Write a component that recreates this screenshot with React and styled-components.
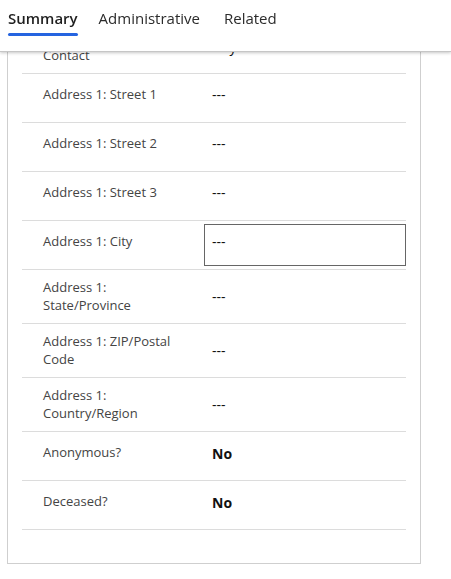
import styled, { createGlobalStyle } from 'styled-components';

const GlobalStyle = createGlobalStyle`
  html, body {
    margin: 0;
    padding: 0;
    background: #ffffff;
    font-family: "Open Sans", "Noto Sans", Arial, sans-serif;
    color: #242424;
  }
`;

const TabBar = styled.div`
  position: fixed;
  top: 0;
  left: 0;
  right: 0;
  height: 51px;
  display: flex;
  align-items: flex-start;
  background: #ffffff;
  border-bottom: 1px solid #c6c6c6;
  box-shadow: 0 1px 3px rgba(0, 0, 0, 0.22);
  z-index: 2;
  padding-left: 8px;
`;

const Tab = styled.div`
  position: relative;
  height: 36px;
  margin-right: ${(props) => props.gap}px;
  padding-top: 8px;
  box-sizing: border-box;
  font-size: 15px;
  line-height: 20px;
  font-weight: ${(props) => (props.active ? 600 : 400)};
  color: ${(props) => (props.active ? '#1f1f1f' : '#2b2b2b')};
  white-space: nowrap;

  &::after {
    content: '';
    display: ${(props) => (props.active ? 'block' : 'none')};
    position: absolute;
    left: 0;
    right: 0;
    bottom: 0;
    height: 3px;
    border-radius: 2px;
    background: #2564e0;
  }
`;

const Card = styled.div`
  margin: 0 30px 16px 7px;
  padding: 20px 14px 33px;
  border: 1px solid #cfcfcf;
  border-top: none;
  background: #ffffff;
`;

const Row = styled.div`
  display: grid;
  grid-template-columns: 182px 1fr;
  align-items: stretch;
  padding: 3px 0;
  min-height: ${(props) => (props.tall ? 47 : 42)}px;
  border-bottom: 1px solid #dcdcdc;
`;

const Label = styled.div`
  padding: ${(props) => (props.tall ? '5px' : '7px')} 8px 0 21px;
  font-size: 13px;
  line-height: ${(props) => (props.tall ? 18 : 20)}px;
  color: #444444;
`;

const Value = styled.div`
  padding: ${(props) => (props.bold ? 8 : props.tall ? 13 : 7)}px 7px 0;
  box-sizing: border-box;
  border: 1px solid ${(props) => (props.focused ? '#666666' : 'transparent')};
  font-size: 14px;
  line-height: 20px;
  font-weight: ${(props) => (props.bold ? 700 : 400)};
  color: #111111;
`;

const fields = [
  { label: 'Preferred Method of Contact', value: 'Any', tall: true },
  { label: 'Address 1: Street 1', value: '---' },
  { label: 'Address 1: Street 2', value: '---' },
  { label: 'Address 1: Street 3', value: '---' },
  { label: 'Address 1: City', value: '---', focused: true },
  { label: 'Address 1: State/Province', value: '---', tall: true },
  { label: 'Address 1: ZIP/Postal Code', value: '---', tall: true },
  { label: 'Address 1: Country/Region', value: '---', tall: true },
  { label: 'Anonymous?', value: 'No', bold: true },
  { label: 'Deceased?', value: 'No', bold: true },
];

const tabs = [
  { name: 'Summary', active: true, gap: 21 },
  { name: 'Administrative', gap: 24 },
  { name: 'Related', gap: 0 },
];

const App = () => {
  return (
    <>
      <GlobalStyle />
      <TabBar>
        {tabs.map((tab) => (
          <Tab key={tab.name} active={tab.active} gap={tab.gap}>
            {tab.name}
          </Tab>
        ))}
      </TabBar>
      <Card>
        {fields.map((field) => (
          <Row key={field.label} tall={field.tall}>
            <Label tall={field.tall}>{field.label}</Label>
            <Value focused={field.focused} bold={field.bold} tall={field.tall}>
              {field.value}
            </Value>
          </Row>
        ))}
      </Card>
    </>
  );
};

export default App;
